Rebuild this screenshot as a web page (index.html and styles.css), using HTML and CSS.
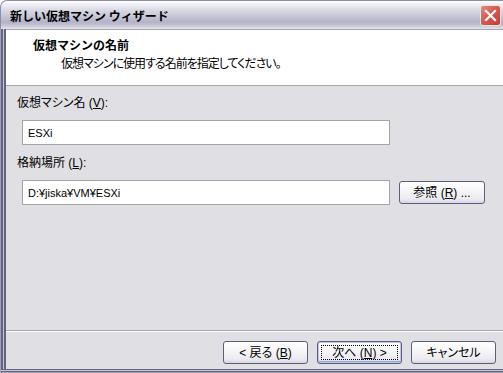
FILE: index.html
```html
<!DOCTYPE html>
<html lang="ja">
<head>
<meta charset="utf-8">
<link rel="stylesheet" href="styles.css">
</head>
<body>
<div class="window">
  <div class="titlebar">
    <span class="title">新しい仮想マシン ウィザード</span>
    <span class="close">
      <svg width="21" height="21" viewBox="0 0 21 21"><path d="M6 6 L15 15 M15 6 L6 15" stroke="#fff" stroke-width="2.2" stroke-linecap="square"/></svg>
    </span>
  </div>
  <div class="frame">
    <div class="client">
      <div class="header">
        <div class="h-title">仮想マシンの名前</div>
        <div class="h-sub">仮想マシンに使用する名前を指定してください。</div>
      </div>
      <div class="body">
        <div class="label">仮想マシン名 (<u>V</u>):</div>
        <div class="input">ESXi</div>
        <div class="label label2">格納場所 (<u>L</u>):</div>
        <div class="row">
          <div class="input">D:¥jiska¥VM¥ESXi</div>
          <div class="btn browse">参照 (<u>R</u>) ...</div>
        </div>
      </div>
      <div class="footer">
        <div class="btn">&lt; 戻る (<u>B</u>)</div>
        <div class="btn default"><span class="focus">次へ (<u>N</u>) &gt;</span></div>
        <div class="btn">キャンセル</div>
      </div>
    </div>
  </div>
</div>
</body>
</html>
```
FILE: styles.css
```css
html, body {
  margin: 0;
  padding: 0;
}
body {
  width: 503px;
  height: 373px;
  overflow: hidden;
  background: #ffffff;
  font-family: "Liberation Sans", "Noto Sans CJK JP", sans-serif;
  font-size: 12px;
  line-height: 14px;
  color: #000;
}
.window {
  width: 503px;
  height: 373px;
  display: flex;
  flex-direction: column;
}
.titlebar {
  flex: none;
  height: 29px;
  box-sizing: border-box;
  border-top: 1px solid #8d8ca6;
  border-left: 1px solid #8d8ca6;
  border-radius: 7px 0 0 0;
  background: linear-gradient(#ffffff 0%, #f3f3f7 10%, #dcdce6 30%, #c6c6d6 55%, #b3b2c8 75%, #c6c6d6 88%, #e6e6ee 100%);
  display: flex;
  align-items: center;
  justify-content: space-between;
  padding: 0 2px 0 9px;
}
.title {
  font-family: "Noto Sans CJK JP", sans-serif;
  font-weight: bold;
  font-size: 12px;
  line-height: 14px;
  padding-top: 1px;
}
.close {
  width: 21px;
  height: 21px;
  box-sizing: border-box;
  border: 1px solid #f4e4e4;
  border-radius: 3px;
  background: linear-gradient(135deg, #e88a80 0%, #d65a4f 45%, #c23e35 100%);
  display: flex;
}
.close svg { display: block; margin: -1px; }
.frame {
  flex: 1;
  display: flex;
  border-left: 1px solid #a3a2b8;
  padding-bottom: 4px;
  background:
    linear-gradient(to top, #a3a2b8 0 1px, #64637e 1px 2px, #c8c7d6 2px 3px, #64637e 3px 4px, transparent 4px),
    linear-gradient(to right, #64637e 0 2px, #c8c7d6 2px 3px, #64637e 3px 5px, transparent 5px);
}
.client {
  flex: 1;
  display: flex;
  flex-direction: column;
  margin-left: 5px;
  background: #e0dfe3;
}
.header {
  flex: none;
  height: 57px;
  box-sizing: border-box;
  background: #ffffff;
  border-top: 1px solid #a7a6aa;
  border-bottom: 1px solid #a7a6aa;
  padding-left: 27px;
  padding-top: 8px;
}
.h-title {
  font-family: "Noto Sans CJK JP", sans-serif;
  font-weight: bold;
  line-height: 14px;
}
.h-sub {
  font-family: "Noto Sans CJK JP", sans-serif;
  font-feature-settings: "palt";
  letter-spacing: -1px;
  margin-top: 4px;
  padding-left: 28px;
  line-height: 14px;
}
.body {
  flex: none;
  height: 245px;
  box-sizing: border-box;
  padding: 10px 0 0 11px;
  border-bottom: 1px solid #a7a6aa;
}
.label {
  font-feature-settings: "palt";
  height: 14px;
}
.label2 { margin-top: 11px; }
.input {
  margin: 10px 0 0 5px;
  width: 368px;
  height: 25px;
  box-sizing: border-box;
  border: 1px solid #a5a5a5;
  background: #fff;
  font-family: "Liberation Sans", sans-serif;
  font-size: 11px;
  padding-left: 5px;
  display: flex;
  align-items: center;
}
.row {
  display: flex;
  align-items: flex-end;
}
.btn {
  width: 85px;
  height: 23px;
  box-sizing: border-box;
  border: 1px solid #5f5e7c;
  border-radius: 3px;
  background: linear-gradient(#ffffff 0%, #f6f6f9 40%, #ebebf0 80%, #d6d5e0 100%);
  display: flex;
  align-items: center;
  justify-content: center;
  font-feature-settings: "palt";
  white-space: nowrap;
  padding-top: 1px;
}
.browse {
  margin-left: 9px;
  margin-bottom: 1px;
  width: 86px;
}
.footer {
  flex: none;
  height: 38px;
  box-sizing: border-box;
  border-top: 1px solid #ffffff;
  display: flex;
  justify-content: flex-end;
  gap: 9px;
  padding: 9px 7px 0 0;
}
.footer .btn {
  width: 85px;
  height: 23px;
}
.btn.default {
  padding: 3px;
  box-shadow: inset 0 0 0 1px #b9c6e9, inset 0 -1px 0 1px #97a8dc;
}
.focus {
  flex: 1;
  align-self: stretch;
  display: flex;
  align-items: center;
  justify-content: center;
  border: 1px dotted #000;
  padding-top: 1px;
}
u { text-decoration: underline; }
```
